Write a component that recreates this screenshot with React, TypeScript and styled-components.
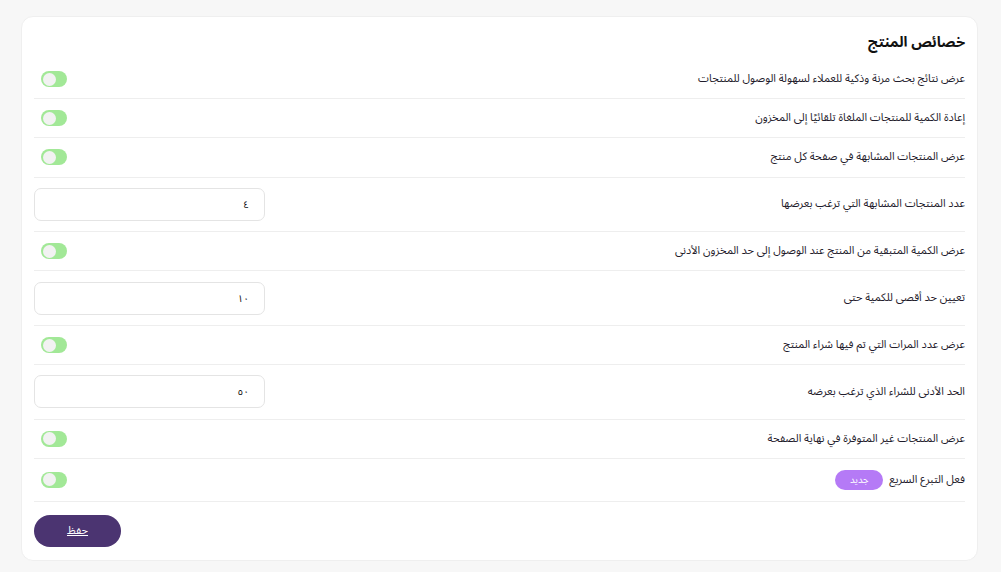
import React from 'react';
import styled, { createGlobalStyle } from 'styled-components';

const GlobalStyle = createGlobalStyle`
  html, body {
    margin: 0;
    padding: 0;
    background: #f7f7f7;
    font-family: "Noto Sans Arabic", "Noto Kufi Arabic", "DejaVu Sans", "Noto Sans", sans-serif;
  }
`;

type Setting =
  | { kind: 'toggle'; label: string; badge?: string }
  | { kind: 'input'; label: string; value: string };

const settings: Setting[] = [
  { kind: 'toggle', label: 'عرض نتائج بحث مرنة وذكية للعملاء لسهولة الوصول للمنتجات' },
  { kind: 'toggle', label: 'إعادة الكمية للمنتجات الملغاة تلقائيًا إلى المخزون' },
  { kind: 'toggle', label: 'عرض المنتجات المشابهة في صفحة كل منتج' },
  { kind: 'input', label: 'عدد المنتجات المشابهة التي ترغب بعرضها', value: '٤' },
  { kind: 'toggle', label: 'عرض الكمية المتبقية من المنتج عند الوصول إلى حد المخزون الأدنى' },
  { kind: 'input', label: 'تعيين حد أقصى للكمية حتى', value: '١٠' },
  { kind: 'toggle', label: 'عرض عدد المرات التي تم فيها شراء المنتج' },
  { kind: 'input', label: 'الحد الأدنى للشراء الذي ترغب بعرضه', value: '٥٠' },
  { kind: 'toggle', label: 'عرض المنتجات غير المتوفرة في نهاية الصفحة' },
  { kind: 'toggle', label: 'فعل التبرع السريع', badge: 'جديد' },
];

export default function App() {
  return (
    <>
      <GlobalStyle />
      <Card dir="rtl">
        <Title>خصائص المنتج</Title>
        <List>
          {settings.map((s, i) => (
            <Row key={i} $h={s.kind === 'input' ? 54.6 : s.kind === 'toggle' && s.badge ? 43 : 39.2}>
              <Label>
                {s.label}
                {s.kind === 'toggle' && s.badge && <Badge>{s.badge}</Badge>}
              </Label>
              {s.kind === 'toggle' ? (
                <Toggle aria-label={s.label}>
                  <Knob />
                </Toggle>
              ) : (
                <Field defaultValue={s.value} />
              )}
            </Row>
          ))}
        </List>
        <Footer>
          <SaveButton>حفظ</SaveButton>
        </Footer>
      </Card>
    </>
  );
}

const Card = styled.div`
  margin: 16px 23px 0 21px;
  background: #ffffff;
  border: 1px solid #efefef;
  border-radius: 12px;
  padding: 14px 12px 13px;
  box-sizing: border-box;
`;

const Title = styled.h2`
  margin: 0 0 5px;
  font-size: 14.5px;
  line-height: 24px;
  font-weight: 700;
  color: #111111;
`;

const List = styled.div`
  display: flex;
  flex-direction: column;
`;

const Row = styled.div<{ $h: number }>`
  display: flex;
  align-items: center;
  justify-content: space-between;
  box-sizing: border-box;
  height: ${(p) => p.$h}px;
  border-bottom: 1px solid #eeeeee;
`;

const Label = styled.div`
  display: flex;
  align-items: center;
  gap: 6px;
  font-size: 11px;
  line-height: 16px;
  color: #1f1c2c;
`;

const Badge = styled.span`
  display: inline-flex;
  align-items: center;
  justify-content: center;
  width: 48px;
  height: 20px;
  border-radius: 10px;
  background: #b57af6;
  color: #ffffff;
  font-size: 9.5px;
`;

const Toggle = styled.button`
  position: relative;
  width: 26px;
  height: 16px;
  margin-left: 7px;
  padding: 0;
  border: none;
  border-radius: 8px;
  background: #a2e897;
  cursor: pointer;
`;

const Knob = styled.span`
  position: absolute;
  top: 1.5px;
  left: 1.5px;
  width: 13px;
  height: 13px;
  border-radius: 50%;
  background: #f2f2f2;
`;

const Field = styled.input`
  width: 231px;
  height: 33px;
  box-sizing: border-box;
  border: 1px solid #e4e4e4;
  border-radius: 7px;
  padding: 0 15px;
  font-family: inherit;
  font-size: 10px;
  color: #111111;
  text-align: right;
  direction: rtl;
  outline: none;
  background: #ffffff;
`;

const Footer = styled.div`
  display: flex;
  justify-content: flex-end;
  margin-top: 13px;
`;

const SaveButton = styled.button`
  width: 87px;
  height: 32px;
  border: none;
  border-radius: 16px;
  background: #4b3471;
  color: #ffffff;
  font-family: inherit;
  font-size: 11px;
  text-decoration: underline;
  cursor: pointer;
`;
